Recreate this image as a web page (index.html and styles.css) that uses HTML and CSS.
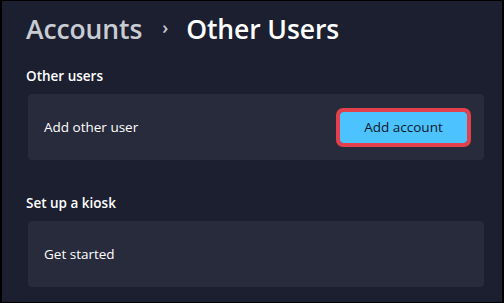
FILE: index.html
```html
<!DOCTYPE html>
<html>
<head>
<meta charset="utf-8">
<link rel="stylesheet" href="styles.css">
</head>
<body>
<div class="frame">
  <h1 class="title"><span class="crumb">Accounts</span><span class="chev">›</span><span class="current">Other Users</span></h1>
  <section class="group">
    <h2 class="label">Other users</h2>
    <div class="card">
      <span class="card-text">Add other user</span>
      <button class="btn">Add account</button>
    </div>
  </section>
  <section class="group kiosk">
    <h2 class="label">Set up a kiosk</h2>
    <div class="card">
      <span class="card-text">Get started</span>
    </div>
  </section>
</div>
</body>
</html>
```
FILE: styles.css
```css
html, body {
  margin: 0;
  padding: 0;
  background: #000;
}
.frame {
  box-sizing: border-box;
  width: 504px;
  height: 303px;
  border-style: solid;
  border-color: #000;
  border-width: 1px 2px 1px 2px;
  background: #1b1f30;
  padding: 0 18px 0 24px;
  font-family: "Open Sans", "Noto Sans", sans-serif;
  color: #fff;
  overflow: hidden;
}
.title {
  margin: 0;
  padding-top: 10px;
  font-size: 26.5px;
  font-weight: 600;
  line-height: 36px;
  display: flex;
  align-items: center;
  white-space: nowrap;
  letter-spacing: -0.1px;
}
.crumb { color: #c9ccd3; }
.chev {
  color: #c9ccd3;
  font-size: 18px;
  margin: 0 18px 0 20px;
  position: relative;
  top: -2px;
}
.current { color: #ffffff; }
.group { margin-top: 19px; }
.kiosk { margin-top: 33px; }
.label {
  margin: 0 0 8px 0;
  font-size: 13.5px;
  font-weight: 600;
  line-height: 20px;
  color: #ffffff;
}
.card {
  margin-left: 2px;
  height: 66px;
  background: #282b3c;
  border-radius: 4px;
  display: flex;
  align-items: center;
  justify-content: space-between;
  padding: 0 17px 0 16px;
}
.card-text {
  font-size: 13.5px;
  color: #ffffff;
}
.btn {
  width: 127px;
  height: 31px;
  background: #4cc2ff;
  border: none;
  border-radius: 3px;
  outline: 4px solid #e2404a;
  outline-offset: 0;
  font-family: "Open Sans", "Noto Sans", sans-serif;
  font-size: 13.5px;
  color: #0c1929;
  padding: 0;
}
```
